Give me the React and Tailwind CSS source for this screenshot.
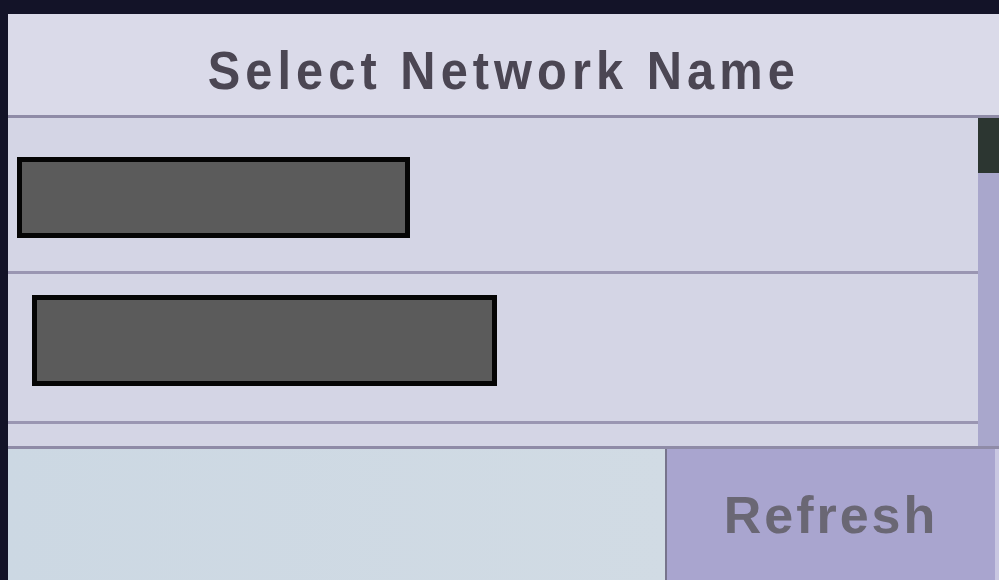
import React from "react";

export default function App() {
  return (
    <div className="w-[999px] h-[580px] bg-[#131328] flex flex-col overflow-hidden" style={{ fontFamily: '"Liberation Sans", Arial, sans-serif' }}>
      <div className="h-[14px] shrink-0" />
      <div className="flex flex-1 min-h-0">
        <div className="w-[8px] shrink-0" />
        <div className="flex-1 flex flex-col min-w-0">
          {/* Header */}
          <div className="h-[104px] shrink-0 bg-[#dadae9] flex items-center justify-center border-b-[3px] border-[#8f8ba7]">
            <span className="text-[53px] leading-none font-bold text-[#4b4653] tracking-[5.5px] scale-x-[0.92] pt-[12px]">
              Select Network Name
            </span>
          </div>
          {/* List area */}
          <div className="h-[331px] shrink-0 flex border-b-[3px] border-[#8f8ba7]">
            <div className="flex-1 flex flex-col bg-[#d4d5e5]">
              <div className="h-[156px] shrink-0 border-b-[3px] border-[#9a96b2] pt-[39px] pl-[9px]">
                <div className="w-[393px] h-[81px] border-[5px] border-[#050505] bg-[#5b5b5b]" />
              </div>
              <div className="h-[150px] shrink-0 border-b-[3px] border-[#9a96b2] pt-[21px] pl-[24px]">
                <div className="w-[465px] h-[91px] border-[5px] border-[#050505] bg-[#5b5b5b]" />
              </div>
              <div className="flex-1" />
            </div>
            <div className="w-[21px] shrink-0 bg-[#a9a7cc] flex flex-col">
              <div className="h-[55px] bg-[#2c3631]" />
            </div>
          </div>
          {/* Bottom bar */}
          <div className="flex-1 flex min-h-0">
            <div className="w-[657px] shrink-0 bg-gradient-to-r from-[#ccd8e3] to-[#d1dbe4]" />
            <div className="w-[2px] shrink-0 bg-[#77748c]" />
            <div className="flex-1 bg-[#a9a5cf] border-r-[4px] border-[#c9c7e2] flex items-center justify-center">
              <span className="text-[52px] leading-none font-bold text-[#6a6774] tracking-[3px]">
                Refresh
              </span>
            </div>
          </div>
        </div>
      </div>
    </div>
  );
}
